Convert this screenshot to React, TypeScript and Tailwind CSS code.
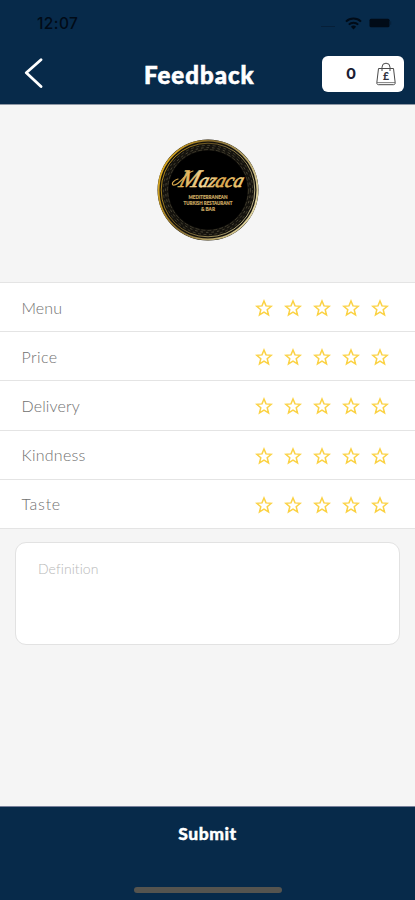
import { useState } from 'react';

interface RatingRowProps {
  label: string;
  labelClass: string;
  value: number;
  onChange: (value: number) => void;
}

const categories = [
  { label: 'Menu', labelClass: 'tracking-[0.1px]' },
  { label: 'Price', labelClass: 'tracking-[0.4px]' },
  { label: 'Delivery', labelClass: 'tracking-[0.15px]' },
  { label: 'Kindness', labelClass: 'tracking-[0.25px]' },
  { label: 'Taste', labelClass: 'tracking-[0.75px]' },
];

export default function App() {
  const [ratings, setRatings] = useState<Record<string, number>>({});
  const [definition, setDefinition] = useState('');

  return (
    <div className="flex h-[900px] w-full flex-col overflow-hidden bg-[#f5f5f5] font-['Lato',sans-serif]">
      <header className="h-[105px] shrink-0 border-b border-[#8f98a5] bg-[#072a4a]">
        <StatusBar />
        <div className="grid h-[56px] grid-cols-[120px_1fr_82px] items-center pr-[11px] pl-[24px]">
          <button aria-label="Back" className="justify-self-start">
            <svg width="20" height="32" viewBox="0 0 20 32" fill="none" stroke="#fff" strokeWidth="2.8" strokeLinecap="round" strokeLinejoin="round">
              <path d="M17 1.8 2.3 14.8 17 28.5" />
            </svg>
          </button>
          <h1 className="pt-px text-[24px] leading-7 font-black tracking-[1px] text-white [-webkit-text-stroke:0.6px_white]">Feedback</h1>
          <button className="flex h-[36px] w-[82px] items-center justify-between rounded-[6px] bg-white pr-[8px] pl-[24px]">
            <span className="pt-px font-['Inter',sans-serif] text-[15px] font-bold text-[#1b1d33]">0</span>
            <BagIcon />
          </button>
        </div>
      </header>

      <div className="flex h-[177px] shrink-0 justify-center pt-[33px]">
        <Logo />
      </div>

      <div className="shrink-0 border-t border-[#e4e4e4] bg-white">
        {categories.map(({ label, labelClass }) => (
          <RatingRow
            key={label}
            label={label}
            labelClass={labelClass}
            value={ratings[label] ?? 0}
            onChange={(value) => setRatings({ ...ratings, [label]: value })}
          />
        ))}
      </div>

      <textarea
        value={definition}
        onChange={(e) => setDefinition(e.target.value)}
        placeholder="Definition"
        className="mx-[15px] mt-[13px] h-[103px] shrink-0 resize-none rounded-[11px] border border-[#e2e2e2] bg-white px-[22px] py-[16px] text-[14px] leading-5 font-light tracking-[0.05px] outline-none placeholder:text-[#b8b8b8]"
      />

      <footer className="mt-auto flex h-[94px] shrink-0 flex-col items-center justify-between border-t border-[#77809a] bg-[#072a4a] pt-[15px] pb-[7px]">
        <button className="text-[17.5px] leading-6 font-black tracking-[0.5px] text-white [-webkit-text-stroke:0.4px_white]">Submit</button>
        <div className="h-[6px] w-[148px] rounded-full bg-[#55544f]" />
      </footer>
    </div>
  );
}

function StatusBar() {
  return (
    <div className="flex h-[46px] items-center justify-between pr-[23px] pl-[37px] text-[#010b17]">
      <span className="pt-px font-['Inter',sans-serif] text-[15.5px] leading-5 font-medium tracking-[0.4px]">12:07</span>
      <div className="flex items-center">
        <span className="mt-[7px] mr-[10px] h-px w-[14px] bg-[#061f38]" />
        <svg className="mr-[7px]" width="17" height="13" viewBox="0 0 17 13" fill="none" stroke="currentColor" strokeWidth="2">
          <path d="M1 4.6a10.8 10.8 0 0 1 15 0M3.8 7.6a6.8 6.8 0 0 1 9.4 0" />
          <path d="m8.5 12.5-2.6-2.8a3.8 3.8 0 0 1 5.2 0z" fill="currentColor" stroke="none" />
        </svg>
        <svg width="23" height="10" viewBox="0 0 23 10">
          <rect x=".5" y=".8" width="20" height="8.5" rx="1.5" fill="currentColor" />
          <path d="M21.7 3.4v3.2" stroke="#061f38" />
        </svg>
      </div>
    </div>
  );
}

function BagIcon() {
  return (
    <svg width="20" height="24" viewBox="0 0 20 24" fill="none" stroke="#4a4a4a">
      <path d="M2.5 6.5h15l1.7 14.3c.1 1-.6 1.9-1.6 1.9H2.4c-1 0-1.7-.9-1.6-1.9z" />
      <path d="M1 20.6h18" strokeWidth=".7" />
      <path d="M6 9V5.2a4 4 0 0 1 8 0V9" />
      <text x="10" y="18" textAnchor="middle" fontFamily="Lato, sans-serif" fontSize="10.5" fontWeight="900" fill="#30323d" stroke="none">£</text>
    </svg>
  );
}

function RatingRow({ label, labelClass, value, onChange }: RatingRowProps) {
  return (
    <div className="flex h-[49.2px] items-center justify-between border-b border-[#e4e4e4] pr-[26px] pl-[21.5px]">
      <span className={`pt-px text-[16px] leading-5 font-light text-[#707070] ${labelClass}`}>{label}</span>
      <div className="flex gap-[11.1px] pt-[2px]">
        {[1, 2, 3, 4, 5].map((n) => (
          <button key={n} aria-label={`${label} ${n}`} onClick={() => onChange(n)}>
            <svg width="18" height="18" viewBox="0 0 18 18" fill={n <= value ? '#fbd03b' : 'none'} stroke="#fbd244" strokeWidth="1.5" strokeLinejoin="miter">
              <path d="m9 2 2 4.900 5.200.400-4 3.400 1.300 5.200L9 13.100l-4.500 2.800 1.300-5.200-4-3.400 5.200-.400z" />
            </svg>
          </button>
        ))}
      </div>
    </div>
  );
}

function Logo() {
  return (
    <svg width="104" height="104" viewBox="0 0 104 104">
      <defs>
        <linearGradient id="ring" x1="0" y1="0.3" x2="1" y2="0.7">
          <stop offset="0" stopColor="#e0ad20" />
          <stop offset=".35" stopColor="#80662b" />
          <stop offset=".7" stopColor="#b7a568" />
          <stop offset="1" stopColor="#e6dba9" />
        </linearGradient>
        <linearGradient id="gold" x1="0" y1="0" x2="1" y2="0">
          <stop offset="0" stopColor="#d9a94c" />
          <stop offset=".4" stopColor="#f5dda0" />
          <stop offset=".65" stopColor="#dca94e" />
          <stop offset="1" stopColor="#f1cf7b" />
        </linearGradient>
      </defs>
      <circle cx="52" cy="52" r="50.5" fill="#14120d" />
      <circle cx="52" cy="52" r="49.4" fill="none" stroke="url(#ring)" strokeWidth="1.8" />
      <circle cx="52" cy="52" r="46.8" fill="none" stroke="url(#ring)" strokeWidth=".8" />
      <g fill="none" stroke="#777055" strokeWidth=".8">
        <circle cx="52" cy="52" r="44.6" strokeDasharray="3 2.5" strokeOpacity=".55" />
        <circle cx="52" cy="52" r="42.4" strokeDasharray="2.5 3" strokeOpacity=".7" />
        <circle cx="52" cy="52" r="40.4" strokeDasharray="4 2" strokeOpacity=".5" />
      </g>
      <circle cx="52" cy="52" r="39.6" fill="#000" />
      <path d="M22 41c-4 1-7 4.500-5 6 3 1 7-3 11-7.500 3-3 5-5.500 9-6.500" fill="none" stroke="#d9a94c" strokeWidth="1.2" strokeLinecap="round" />
      <g fill="url(#gold)">
        <text x="36" y="49" transform="skewX(-16)" fontFamily="'Liberation Serif', serif" fontStyle="italic" fontSize="20" fontWeight="400" stroke="url(#gold)" strokeWidth=".7" textLength="64" lengthAdjust="spacingAndGlyphs">
          <tspan fontSize="25">M</tspan>azaca
        </text>
        <g fontFamily="Lato, sans-serif" fontSize="5.6" fontWeight="900" fill="#c7a660" textAnchor="middle" stroke="#c7a660" strokeWidth=".2">
          <text x="52" y="60.5" textLength="39" lengthAdjust="spacingAndGlyphs">MEDITERRANEAN</text>
          <text x="52" y="66.5" textLength="49" lengthAdjust="spacingAndGlyphs">TURKISH RESTAURANT</text>
          <text x="52" y="72.5" textLength="14" lengthAdjust="spacingAndGlyphs">&amp; BAR</text>
        </g>
      </g>
    </svg>
  );
}
